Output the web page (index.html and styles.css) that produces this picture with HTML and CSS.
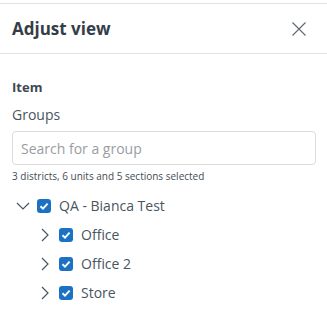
FILE: index.html
```html
<!DOCTYPE html>
<html lang="en">

<head>
  <meta charset="UTF-8" />
  <title>Adjust view</title>
  <link rel="stylesheet" href="styles.css">
</head>

<body>
  <div class="panel">
    <div class="panel-header">
      <h2>Adjust view</h2>
      <button class="close-btn" aria-label="Close">
        <svg width="16" height="16" viewBox="0 0 16 16">
          <path d="M1.5 1.5 L14.5 14.5 M14.5 1.5 L1.5 14.5" stroke="#5f6670" stroke-width="1.1" fill="none" />
        </svg>
      </button>
    </div>

    <div class="panel-body">
      <div class="section-title">Item</div>
      <label class="field-label" for="groupSearch">Groups</label>
      <input id="groupSearch" class="search" type="text" placeholder="Search for a group" />
      <div class="hint">3 districts, 6 units and 5 sections selected</div>

      <ul class="tree">
        <li class="tree-row">
          <span class="chevron">
            <svg width="14" height="14" viewBox="0 0 14 14">
              <path d="M1 4 L7 10 L13 4" stroke="#4a5560" stroke-width="1.2" fill="none" />
            </svg>
          </span>
          <span class="check"><svg width="10" height="10" viewBox="0 0 10 10"><path d="M1.5 5.2 L4 7.6 L8.6 2.6" stroke="#fff" stroke-width="1.9" fill="none" /></svg></span>
          <span class="tree-label">QA - Bianca Test</span>
        </li>
        <li class="tree-row child">
          <span class="chevron">
            <svg width="14" height="14" viewBox="0 0 14 14">
              <path d="M4 1 L10 7 L4 13" stroke="#4a5560" stroke-width="1.2" fill="none" />
            </svg>
          </span>
          <span class="check"><svg width="10" height="10" viewBox="0 0 10 10"><path d="M1.5 5.2 L4 7.6 L8.6 2.6" stroke="#fff" stroke-width="1.9" fill="none" /></svg></span>
          <span class="tree-label">Office</span>
        </li>
        <li class="tree-row child">
          <span class="chevron">
            <svg width="14" height="14" viewBox="0 0 14 14">
              <path d="M4 1 L10 7 L4 13" stroke="#4a5560" stroke-width="1.2" fill="none" />
            </svg>
          </span>
          <span class="check"><svg width="10" height="10" viewBox="0 0 10 10"><path d="M1.5 5.2 L4 7.6 L8.6 2.6" stroke="#fff" stroke-width="1.9" fill="none" /></svg></span>
          <span class="tree-label">Office 2</span>
        </li>
        <li class="tree-row child">
          <span class="chevron">
            <svg width="14" height="14" viewBox="0 0 14 14">
              <path d="M4 1 L10 7 L4 13" stroke="#4a5560" stroke-width="1.2" fill="none" />
            </svg>
          </span>
          <span class="check"><svg width="10" height="10" viewBox="0 0 10 10"><path d="M1.5 5.2 L4 7.6 L8.6 2.6" stroke="#fff" stroke-width="1.9" fill="none" /></svg></span>
          <span class="tree-label">Store</span>
        </li>
      </ul>
    </div>
  </div>
</body>

</html>
```

FILE: styles.css
```css
body {
  margin: 0;
  font-family: "Open Sans", "Noto Sans", sans-serif;
  background: #ffffff;
  color: #4a5560;
}

.panel {
  margin-top: 3px;
  border-top: 1px solid #e2e2e2;
}

.panel-header {
  height: 49px;
  padding: 0 20px 0 12px;
  display: flex;
  align-items: center;
  justify-content: space-between;
  border-bottom: 1px solid #e2e2e2;
}

.panel-header h2 {
  margin: 0;
  font-size: 17px;
  font-weight: bold;
  color: #343e49;
}

.close-btn {
  border: none;
  background: none;
  padding: 0;
  width: 16px;
  height: 16px;
  cursor: pointer;
}

.panel-body {
  padding: 24px 11px 0 12px;
}

.section-title {
  font-size: 13px;
  font-weight: bold;
  color: #3e4852;
  line-height: 18px;
}

.field-label {
  display: block;
  margin-top: 9px;
  font-size: 14px;
  line-height: 20px;
  color: #4a5560;
}

.search {
  display: block;
  width: 100%;
  box-sizing: border-box;
  height: 34px;
  margin-top: 6px;
  padding: 0 8px;
  border: 1px solid #dcdcdc;
  border-radius: 4px;
  font-family: inherit;
  font-size: 14px;
  color: #4a5560;
}

.search::placeholder {
  color: #999da3;
}

.hint {
  margin-top: 4px;
  font-size: 10px;
  line-height: 14px;
  color: #444c55;
}

.tree {
  list-style: none;
  margin: 8px 0 0;
  padding: 0 0 0 4px;
}

.tree-row {
  display: flex;
  align-items: center;
  height: 29px;
  font-size: 14px;
}

.tree-row.child {
  padding-left: 22px;
}

.chevron {
  width: 14px;
  height: 14px;
  display: flex;
  margin-right: 7px;
}

.check {
  width: 14px;
  height: 14px;
  border-radius: 3px;
  background: #1b72c5;
  display: flex;
  align-items: center;
  justify-content: center;
  margin-right: 8px;
}

.tree-label {
  color: #4a5560;
}
```
